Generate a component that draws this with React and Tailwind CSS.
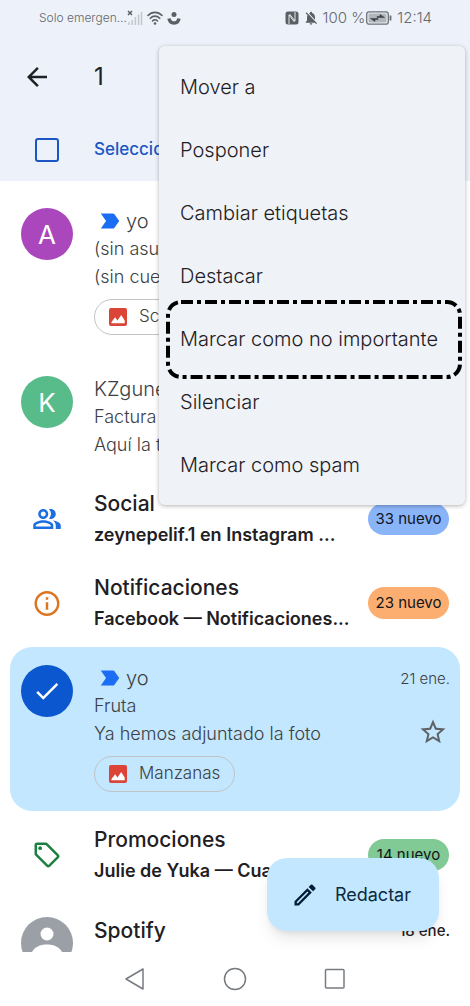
import {
  MdArrowBack,
  MdCheck,
  MdInfoOutline,
  MdLabelImportant,
  MdNotificationsOff,
  MdOutlineLocalOffer,
  MdOutlineModeEdit,
  MdOutlinePeopleAlt,
  MdOutlineStarBorder,
} from "react-icons/md";

const MENU = [
  "Mover a",
  "Posponer",
  "Cambiar etiquetas",
  "Destacar",
  "Marcar como no importante",
  "Silenciar",
  "Marcar como spam",
];

function SignalIcon() {
  return (
    <svg className="h-4 w-4" viewBox="0 0 16 16" aria-hidden="true">
      <path d="M1 1l4 4M5 1L1 5" stroke="#555a60" strokeWidth="1.4" />
      <path d="M2 12v3M5.200 10v5M8.400 7v8M11.600 4.500V15M14.500 2v13" stroke="#c3c6cb" strokeWidth="1.500" />
    </svg>
  );
}

function WifiIcon() {
  return (
    <svg className="h-4 w-4" viewBox="0 0 16 16" aria-hidden="true">
      <g fill="none" stroke="#5b5f64" strokeWidth="1.600" strokeLinecap="round">
        <path d="M1 5.500c4-4.200 10-4.200 14 0" />
        <path d="M3.300 8.300c2.700-2.900 6.700-2.900 9.400 0" />
        <path d="M5.500 11c1.500-1.600 3.500-1.600 5 0" />
      </g>
      <circle cx="8" cy="13.500" r="1.300" fill="#5b5f64" />
    </svg>
  );
}

function HealthIcon() {
  return (
    <svg className="h-4 w-3.5" viewBox="0 0 14 16" aria-hidden="true">
      <circle cx="7" cy="4.500" r="2.500" fill="#5b5f64" />
      <path d="M2 8.500c1 6 9 6 10 0" fill="none" stroke="#5b5f64" strokeWidth="3.400" />
    </svg>
  );
}

function NfcIcon() {
  return (
    <svg className="h-3.5 w-3.5" viewBox="0 0 14 14" aria-hidden="true">
      <rect x="0.500" y="0.500" width="13" height="13" rx="2.500" fill="#5b5f64" />
      <path d="M4 13V4l5.500 7M10 1v9L4.500 3" fill="none" stroke="#e4e8ee" strokeWidth="1" />
    </svg>
  );
}

function BatteryIcon() {
  return (
    <svg className="h-4 w-7" viewBox="0 0 28 16" aria-hidden="true">
      <rect x="1.700" y="1.800" width="21.600" height="12.400" rx="2.500" fill="none" stroke="#6b6f75" strokeWidth="1.300" />
      <rect x="3.500" y="3.600" width="18" height="8.800" rx="1" fill="#b2b5ba" />
      <path d="M12 7.500h7.500L15 4.500v2h-3zM13 8.500H5.500L10 11.500v-2h3z" fill="#3f4347" stroke="#3f4347" strokeWidth="0.600" />
      <path d="M25.500 5.500v5" stroke="#6b6f75" strokeWidth="1.800" />
    </svg>
  );
}

function ImageIcon() {
  return (
    <svg className="h-[18px] w-[18px] shrink-0" viewBox="0 0 18 18" aria-hidden="true">
      <rect width="18" height="18" rx="2" fill="#dc4437" />
      <path d="M2.500 15.200V14l3.600-4.800 2.400 3.200 3.700-5.400 3.500 5.600v2.600z" fill="#fff" />
    </svg>
  );
}

function Marker() {
  return <MdLabelImportant className="h-[26px] w-[26px] shrink-0 text-[#1b6ef3]" aria-hidden="true" />;
}

function Chip({ children }) {
  return (
    <button className="mt-2 flex h-9 w-max items-center gap-3 rounded-full border border-[#c0c3c7] px-3.5 text-[17px] font-light">
      <ImageIcon />
      {children}
    </button>
  );
}

function Message({ avatar, color, sender, subject, body, chip, date, selected, important, minHeight }) {
  return (
    <li
      className={`mx-2.5 flex rounded-[22px] pr-2.5 pb-4 pl-[11px] text-[#3c4043] ${minHeight} ${selected ? "bg-[#c2e7ff]" : ""}`}
    >
      <div className={`mt-[18px] flex h-[52px] w-[52px] shrink-0 items-center justify-center rounded-full text-[26px] text-white ${color}`}>
        {avatar}
      </div>
      <div className="ml-[21px] min-w-0 flex-1 pt-[17px]">
        <div className="flex h-7 items-center text-xl font-light">
          {important && (
            <span className="flex w-8 justify-center">
              <Marker />
            </span>
          )}
          <span className="truncate">{sender}</span>
          {date && <time className="ml-auto text-[15px]">{date}</time>}
        </div>
        <p className="truncate text-lg leading-7 font-light">{subject}</p>
        <div className="flex items-center justify-between">
          <p className="truncate text-lg leading-7 font-light">{body}</p>
          {selected && (
            <button aria-label="Destacar mensaje" className="-mt-2 mr-0.5 -mb-1">
              <MdOutlineStarBorder className="h-[30px] w-[30px] text-[#5f6368]" />
            </button>
          )}
        </div>
        {chip && <Chip>{chip}</Chip>}
      </div>
    </li>
  );
}

function Category({ icon, title, text, count, badge }) {
  return (
    <li className="flex h-20 items-center pr-[21px] pl-8">
      <span className="flex w-[30px] shrink-0 justify-center">{icon}</span>
      <div className="ml-8 min-w-0 flex-1">
        <h2 className="text-[21px] leading-8 font-medium">{title}</h2>
        <p className="text-lg leading-[30px] font-semibold whitespace-nowrap">{text}</p>
      </div>
      <span className={`ml-2 w-[81px] shrink-0 rounded-full text-center text-[15px] leading-8 text-[#10151c] ${badge}`}>{count}</span>
    </li>
  );
}

export default function App() {
  return (
    <div className="relative flex h-screen flex-col overflow-hidden bg-white font-[Inter,'Open_Sans',sans-serif] text-[#1f2023]">
      <header className="shrink-0 bg-[#edf2fa]">
        <div className="flex h-9 items-center pr-[38px] pl-[39px] text-[#64686d]">
          <span className="text-xs font-light">Solo emergen…</span>
          <span className="flex items-center gap-1">
            <SignalIcon />
            <WifiIcon />
            <HealthIcon />
          </span>
          <span className="ml-auto flex items-center gap-1 text-[15px] font-light">
            <NfcIcon />
            <MdNotificationsOff className="h-4 w-4 text-[#5b5f64]" />
            <span className="flex items-center">
              100 %
              <BatteryIcon />
            </span>
            <span>12:14</span>
          </span>
        </div>
        <div className="flex h-[82px] items-center pl-[22px]">
          <button aria-label="Volver">
            <MdArrowBack className="h-[30px] w-[30px]" />
          </button>
          <h1 className="ml-[42px] text-2xl">1</h1>
        </div>
        <label className="flex h-[63px] items-center pl-[35px] text-[17px] font-medium text-[#1b57c4]">
          <input type="checkbox" className="h-6 w-6 appearance-none rounded-[3px] border-2 border-[#1b57c4]" />
          <span className="ml-[35px]">Seleccionar</span>
        </label>
      </header>

      <main className="min-h-0 flex-1 overflow-hidden">
        <ul className="flex flex-col gap-1 pt-[9px]">
          <Message avatar="A" color="bg-[#ab47bc]" important sender="yo" subject="(sin asunto)" body="(sin cuerpo)" chip="Screenshot" minHeight="min-h-[164px]" />
          <Message avatar="K" color="bg-[#57bb8a]" sender="KZgunea" subject="Factura" body="Aquí la tienes" minHeight="min-h-[117px]" />
          <Category icon={<MdOutlinePeopleAlt className="h-[30px] w-[30px] text-[#1b6fe0]" />} title="Social" text="zeynepelif.1 en Instagram ..." count="33 nuevo" badge="bg-[#8ab4f8]" />
          <Category icon={<MdInfoOutline className="h-[31px] w-[31px] text-[#dd7420]" />} title="Notificaciones" text="Facebook — Notificaciones..." count="23 nuevo" badge="bg-[#fcad70]" />
          <Message selected avatar={<MdCheck className="h-[30px] w-[30px]" />} color="bg-[#0b57d0]" important sender="yo" date="21 ene." subject="Fruta" body="Ya hemos adjuntado la foto" chip="Manzanas" minHeight="min-h-[164px]" />
          <Category icon={<MdOutlineLocalOffer className="h-[30px] w-[30px] text-[#1e8040]" />} title="Promociones" text="Julie de Yuka — Cuando..." count="14 nuevo" badge="bg-[#81c995]" />
          <li className="mx-2.5 flex pr-2.5 pl-[11px]">
            <svg className="mt-[18px] h-[52px] w-[52px] shrink-0" viewBox="0 0 52 52" aria-hidden="true">
              <circle cx="26" cy="26" r="26" fill="#9aa0a6" />
              <circle cx="26" cy="17" r="6.500" fill="#fff" />
              <path d="M10 40c0-8 7-12.500 16-12.500S42 32 42 40z" fill="#fff" />
            </svg>
            <div className="ml-[21px] flex-1 pt-4">
              <div className="flex items-center font-medium">
                <h2 className="text-[21px] leading-8">Spotify</h2>
                <time className="ml-auto text-[15px]">18 ene.</time>
              </div>
            </div>
          </li>
        </ul>
      </main>

      <nav className="flex h-[54px] shrink-0 items-center justify-center gap-[76px] bg-white">
        <button aria-label="Atrás">
          <svg className="h-6 w-6" viewBox="0 0 24 24" fill="none" stroke="#777b80" strokeWidth="1.500" strokeLinejoin="round">
            <path d="M20 2v20L3 12z" />
          </svg>
        </button>
        <button aria-label="Inicio">
          <svg className="h-6 w-6" viewBox="0 0 24 24" fill="none" stroke="#777b80" strokeWidth="1.500">
            <circle cx="12" cy="12" r="10.500" />
          </svg>
        </button>
        <button aria-label="Recientes">
          <svg className="h-6 w-6" viewBox="0 0 24 24" fill="none" stroke="#777b80" strokeWidth="1.500">
            <rect x="2.500" y="2.500" width="18.500" height="18.500" rx="1" />
          </svg>
        </button>
      </nav>

      <button className="absolute right-[31px] bottom-[75px] flex h-[73px] items-center gap-4 rounded-[20px] bg-[#c2e7ff] pr-7 pl-6 text-lg text-[#0b2a41] shadow-lg">
        <MdOutlineModeEdit className="h-7 w-7 text-[#001d35]" />
        Redactar
      </button>

      <div role="menu" className="absolute top-[46px] right-[5px] left-[159px] rounded-md bg-[#eff3f8] py-[9px] shadow-[0_1px_4px_rgba(0,0,0,0.3)]">
        {MENU.map((item) => (
          <button key={item} role="menuitem" className="relative flex h-[63px] w-full items-center pl-[21px] text-left text-xl font-light whitespace-nowrap">
            {item}
            {item === "Marcar como no importante" && (
              <svg className="pointer-events-none absolute -top-[7px] left-[7px] h-[79px] w-[296px]" viewBox="0 0 296 79" aria-hidden="true">
                <path
                  d="M15 2H281A13 13 0 0 1 294 15V64A13 13 0 0 1 281 77H15A13 13 0 0 1 2 64V15A13 13 0 0 1 15 2z"
                  fill="none"
                  stroke="#000"
                  strokeWidth="4"
                  strokeDasharray="12 4 4 4"
                />
              </svg>
            )}
          </button>
        ))}
      </div>
    </div>
  );
}
